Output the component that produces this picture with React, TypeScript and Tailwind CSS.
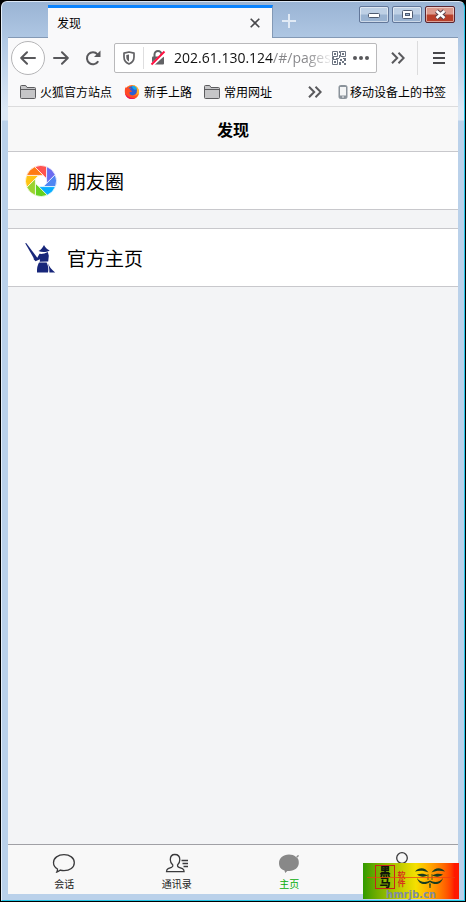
import type { ReactNode } from "react"

const bladeColors = ["#ff5350", "#6b6bf0", "#5086f2", "#08aeff", "#66d11f", "#9ad32f", "#ffc414", "#ff7a14"]

function FolderIcon() {
  return (
    <svg width="16" height="14" viewBox="0 0 16 14" fill="#c5c5c7" stroke="#5c5c5f" strokeLinejoin="round">
      <path d="M.5 12.500v-11a1 1 0 0 1 1-1h4.200l1.300 2h7.500a1 1 0 0 1 1 1v9a1 1 0 0 1-1 1h-13a1 1 0 0 1-1-1z" />
      <path d="M.5 4.500h15" />
    </svg>
  )
}

function FirefoxIcon() {
  return (
    <svg width="16" height="16" viewBox="0 0 16 16">
      <circle cx="8" cy="8" r="7" fill="#ff6a1c" />
      <path d="M8 1c3.900 0 7 3.100 7 7s-3.100 7-7 7c-.9 0-1.800-.2-2.600-.5C10 14.500 13 11.500 12.800 8 12.700 5 11 2.500 8 1z" fill="#ffb52b" />
      <circle cx="8.300" cy="6.800" r="4.600" fill="#2a5fd2" />
      <path d="M8 1.800c2-.2 4 .9 4.800 2.700.2 1-1.400 1.500-2.800.9C8.800 4.800 8 3.500 8 1.800z" fill="#12a8ee" />
      <path d="M1.500 2.500C.8 5 .5 7.500 1.200 10c1 3 3.800 5 6.800 5 3.600 0 6-2.500 6.200-5.500-1.700 2.500-4.200 3-6.200 2.200C5.900 10.900 5 9.300 5.700 8.300c.7-.8 1.800-.2 2.500-.8-.3-.9-1.800-1-2.200-1.700 0-.7.700-1 1.300-1.500-1-.3-1.900 0-2.600.3-.7-.5-1-1.200-1-2-.7.400-1.300 1-1.700 1.700-.3-.6-.5-1.200-.5-1.800z" fill="#ff4a24" />
      <path d="M1.100 9.500c.6 3.400 3.500 5.600 7 5.500 1.500 0 2.500-.4 3.600-1.100C7.500 14.800 3.500 13 1.100 9.500z" fill="#e8125c" />
    </svg>
  )
}

function MoreIcon() {
  return (
    <svg width="14" height="12" viewBox="0 0 14 12" fill="none" stroke="#5a5a5d" strokeWidth="2">
      <path d="M1 .8 6.200 6 1 11.200M7.500.8 12.700 6l-5.200 5.200" />
    </svg>
  )
}

function QrIcon() {
  return (
    <svg width="14" height="14" viewBox="0 0 14 14" fill="none" stroke="#6d7582">
      <path d="M.5.5h5v5h-5zM8.500.5h5v5h-5zM.5 8.500h5v5h-5z" />
      <path
        d="M2 2h2v2H2zM10 2h2v2h-2zM2 10h2v2H2zM7 0h1v2H7zM7 4h1v3H7zM0 6h2v2H0zM4 7h3v1H4zM8 8h2v2H8zM11 7h3v1h-3zM10 10h2v2h-2zM12 8h2v2h-2zM7 11h2v3H7zM12 12h2v2h-2z"
        fill="#6d7582"
        stroke="none"
      />
    </svg>
  )
}

function ShutterIcon() {
  return (
    <svg width="32" height="32" viewBox="-16 -16 32 32">
      {bladeColors.map((color, i) => (
        <path
          key={color}
          d="M5.600-2.300V-14.500A15.500 15.500 0 0 0-6.300-14.200L2.300-5.600z"
          fill={color}
          stroke="#fff"
          strokeWidth=".7"
          transform={`rotate(${i * 45})`}
        />
      ))}
    </svg>
  )
}

function SwordsmanIcon() {
  return (
    <svg width="32" height="32" viewBox="0 0 32 32" fill="#17267a">
      <path d="M.2 1.200 1.200 1l9.600 12.700 2 2.800-1.800 1.300-2.400-1.900z" />
      <path d="M19 3c1.200 2.400 3 4.200 5.700 5.600-3.600 1.900-7.800 1.900-11.200.5C16 7.700 17.800 5.600 19 3z" />
      <path d="M14.500 11.800c2.500.4 5.500-.2 8.300-1.800l1 3.800-.6 5.600-8.500.4.400-2.600-4.600 2-2.200-2.400 2.200-1.300 1.600.6z" />
      <path d="M14 20.600h7.600c1.700 3.200 2.100 6.500 1.400 9.900H12c-.2-3.800.4-7.200 2-9.900z" />
      <path d="M22.500 20.600c1.600 3.900 4 7.400 7.700 9.900h-5.800c.1-3.400-.5-6.500-1.900-9.900z" />
    </svg>
  )
}

function WindowButton({ label, close, children }: { label: string; close?: boolean; children: ReactNode }) {
  return (
    <button
      aria-label={label}
      className={`flex h-[17px] w-[30px] items-center justify-center rounded-xs border shadow-[inset_0_0_0_1px_rgba(255,255,255,0.5)] ${
        close
          ? "border-[#5b2430] bg-linear-to-b from-[#dc9a8d] from-45% to-[#b8402b] to-55%"
          : "border-[#62779a] bg-linear-to-b from-[#bed0e5] from-45% to-[#9ab3d1] to-55%"
      }`}
    >
      {children}
    </button>
  )
}

function Bookmark({ icon, children }: { icon: ReactNode; children: ReactNode }) {
  return (
    <a href="#" className="flex shrink-0 items-center gap-1 whitespace-nowrap">
      {icon}
      {children}
    </a>
  )
}

function Cell({ icon, children }: { icon: ReactNode; children: ReactNode }) {
  return (
    <a href="#" className="flex h-[59px] items-center gap-2.5 border-y border-[#c8c8cc] bg-white px-[17px] text-[19px] text-black">
      {icon}
      {children}
    </a>
  )
}

function TabItem({ label, active, icon }: { label?: string; active?: boolean; icon: ReactNode }) {
  return (
    <a
      href="#"
      aria-label={label ?? "我"}
      className={`flex flex-1 flex-col items-center gap-px pt-1.5 text-[10px] leading-4 ${active ? "text-[#09ad09]" : "text-[#222]"}`}
    >
      {icon}
      {label}
    </a>
  )
}

export default function App() {
  return (
    <div className="relative flex min-h-screen flex-col border border-black bg-black font-['Noto_Sans_CJK_SC',sans-serif] text-xs text-black">
      <div className="flex flex-1 flex-col rounded-t-md border-t border-r border-b border-l border-t-[#dce8f6] border-r-[#25c5e5] border-b-[#25c5e5] border-l-[#e5effa] bg-[linear-gradient(to_bottom,#9ab4d4_0px,#b0c8e4_38px,#dce8f5_108px,#dce8f5_118px,#bad1ea_119px)] px-1.5 pb-1.5">
        {/* Title bar */}
        <div className="flex h-9 items-start border-b border-[#8399b5]">
          <div className="mt-[3px] ml-10 flex h-[33px] w-[225px] items-center justify-between border-t-3 border-r border-t-[#0a84ff] border-r-[#8399b5] bg-[#f9f9fa] pr-3 pl-[9px]">
            <span>发现</span>
            <button aria-label="关闭标签页">
              <svg width="10" height="10" viewBox="0 0 10 10" stroke="#48484b" strokeWidth="1.600">
                <path d="M.7.7l8.600 8.600M9.300.7.7 9.300" />
              </svg>
            </button>
          </div>
          <button aria-label="新建标签页" className="mt-3 ml-[9px]">
            <svg width="14" height="14" viewBox="0 0 14 14" stroke="#e1eaf5" strokeWidth="2">
              <path d="M7 0v14M0 7h14" />
            </svg>
          </button>
          <div className="mt-1 mr-[3px] ml-auto flex gap-[3px]">
            <WindowButton label="最小化">
              <svg width="12" height="5" viewBox="0 0 12 5" className="mt-0.5">
                <rect x=".5" y=".5" width="11" height="4" rx="1" fill="#fff" stroke="#4e5b70" />
              </svg>
            </WindowButton>
            <WindowButton label="最大化">
              <svg width="11" height="9" viewBox="0 0 11 9">
                <rect x=".5" y=".5" width="10" height="8" rx="1" fill="#fff" stroke="#4e5b70" />
                <rect x="3.500" y="3.500" width="4" height="2" fill="#9db5d3" stroke="#4e5b70" />
              </svg>
            </WindowButton>
            <WindowButton label="关闭" close>
              <svg width="13" height="11" viewBox="0 0 13 11">
                <path d="m2.500 2 8 7m0-7-8 7" stroke="#57404a" strokeWidth="4.500" />
                <path d="m2.500 2 8 7m0-7-8 7" stroke="#fff" strokeWidth="2.500" />
              </svg>
            </WindowButton>
          </div>
        </div>

        {/* Navigation toolbar */}
        <div className="flex h-10 items-center bg-[#f9f9fa] pr-3 pl-[3px]">
          <button aria-label="后退" className="flex size-[34px] shrink-0 items-center justify-center rounded-full border border-[#b5b5b7] bg-white">
            <svg width="16" height="14" viewBox="0 0 16 14" fill="none" stroke="#58585b" strokeWidth="2" strokeLinecap="round" strokeLinejoin="round">
              <path d="M15 7H1.500M7 1.200 1.200 7 7 12.800" />
            </svg>
          </button>
          <button aria-label="前进" className="ml-2 shrink-0">
            <svg width="16" height="14" viewBox="0 0 16 14" fill="none" stroke="#58585b" strokeWidth="2" strokeLinecap="round" strokeLinejoin="round">
              <path d="M1 7h13.500M9 1.200 14.800 7 9 12.800" />
            </svg>
          </button>
          <button aria-label="刷新" className="ml-4 shrink-0">
            <svg width="16" height="16" viewBox="0 0 16 16" fill="none" stroke="#58585b" strokeWidth="2">
              <path d="M13.200 11.200A6 6 0 1 1 12.500 4.300" />
              <path d="M15.500.5V7H9z" fill="#58585b" stroke="none" />
            </svg>
          </button>
          <div className="ml-[13px] flex h-[30px] min-w-0 flex-1 items-center rounded-xs border border-[#b9b9bb] bg-white pr-1.5 pl-2">
            <svg width="12" height="14" viewBox="0 0 12 14" className="shrink-0">
              <path d="M6 1 11 2.200V6c0 3.500-2 5.700-5 7-3-1.300-5-3.500-5-7V2.200z" fill="none" stroke="#626265" strokeWidth="1.700" strokeLinejoin="round" />
              <path d="M6 3.500v7C4.200 9.500 3.300 8 3.300 6V4z" fill="#626265" />
            </svg>
            <span className="ml-2 h-[22px] w-px shrink-0 bg-[#dededf]" />
            <svg width="16" height="16" viewBox="0 0 16 16" className="ml-1.5 shrink-0">
              <path d="M4.500 7V4.500a3.500 3.500 0 0 1 7 0V7" fill="none" stroke="#626265" strokeWidth="2" />
              <rect x="2" y="6.500" width="12" height="8" rx="1" fill="#626265" />
              <path d="M.8 16 15.500 2.500" stroke="#fff" strokeWidth="3.500" />
              <path d="M1.500 14.500 14.500 1.500" stroke="#ff1040" strokeWidth="2" />
            </svg>
            <input
              aria-label="地址"
              defaultValue="202.61.130.124/#/pages/"
              className="ml-2 min-w-0 flex-1 bg-[linear-gradient(to_right,#111_99px,#858588_99px,#858588_132px,transparent_160px)] bg-clip-text font-['Open_Sans',sans-serif] text-sm text-transparent outline-none"
            />
            <button aria-label="二维码" className="shrink-0">
              <QrIcon />
            </button>
            <button aria-label="页面操作" className="ml-1.5 shrink-0">
              <svg width="18" height="4" viewBox="0 0 18 4" fill="#58585b">
                <circle cx="3" cy="2" r="2" />
                <circle cx="9" cy="2" r="2" />
                <circle cx="15" cy="2" r="2" />
              </svg>
            </button>
          </div>
          <button aria-label="更多工具" className="ml-3.5 shrink-0">
            <MoreIcon />
          </button>
          <span className="ml-3 h-[34px] w-px shrink-0 bg-[#dcdcdd]" />
          <button aria-label="打开菜单" className="ml-[15px] shrink-0">
            <svg width="13" height="12" viewBox="0 0 13 12" stroke="#48484b" strokeWidth="2">
              <path d="M0 1h12M0 6h12M0 11h12" />
            </svg>
          </button>
        </div>

        {/* Bookmarks bar */}
        <div className="flex h-[29px] items-center gap-3 border-b border-[#dcdcdd] bg-[#f9f9fa] px-3">
          <Bookmark icon={<FolderIcon />}>火狐官方站点</Bookmark>
          <Bookmark icon={<FirefoxIcon />}>新手上路</Bookmark>
          <Bookmark icon={<FolderIcon />}>常用网址</Bookmark>
          <button aria-label="更多书签" className="ml-auto shrink-0">
            <MoreIcon />
          </button>
          <a href="#" className="ml-1 flex shrink-0 items-center gap-0.5 whitespace-nowrap">
            <svg width="10" height="14" viewBox="0 0 10 14">
              <rect x="1" y=".5" width="8" height="13" rx="1.500" fill="#8b939b" stroke="#8b939b" />
              <rect x="2" y="2" width="6" height="8.500" fill="#f4f5f6" />
              <circle cx="5" cy="12" r=".8" fill="#fff" />
            </svg>
            移动设备上的书签
          </a>
        </div>

        {/* Page */}
        <main className="flex flex-1 flex-col bg-[#f3f4f6]">
          <h1 className="flex h-11 items-center justify-center bg-[#f8f8f8] text-base font-bold">发现</h1>
          <div className="flex flex-1 flex-col gap-[18px]">
            <Cell icon={<ShutterIcon />}>朋友圈</Cell>
            <Cell icon={<SwordsmanIcon />}>官方主页</Cell>
          </div>
          <nav className="flex h-[50px] border-t border-[#a0a0a5] bg-[#f8f8f8]">
            <TabItem
              label="会话"
              icon={
                <svg width="24" height="24" viewBox="0 0 24 24" fill="none" stroke="#3a3a3c" strokeWidth="1.300">
                  <path d="M5.500 18c-2.500-1.500-4-3.800-4-6.300C1.500 7 6.200 3.600 12 3.600S22.300 7 22.300 11.700 17.800 19.600 12 19.600c-1.300 0-2.500-.1-3.600-.5-1 .9-2.200 1.600-3.600 1.900.5-1 .7-2 .7-3z" />
                </svg>
              }
            />
            <TabItem
              label="通讯录"
              icon={
                <svg width="24" height="24" viewBox="0 0 24 24" fill="none" stroke="#3a3a3c" strokeWidth="1.300">
                  <path d="M9.800 3.500c3 0 5 2 5 5.200 0 2.300-.8 4-2.300 5.300-.2 1.500.3 1.900 1.500 2.300l3.500 1.300c1.300.6 1.600 1.600 1.600 3.100H1.500c0-1.500.3-2.500 1.600-3.100l3.400-1.300c1.300-.5 1.700-.9 1.300-2.300-1.500-1.300-2.500-3-2.500-5.300 0-3.200 1.600-5.200 4.500-5.200z" />
                  <path d="M16.500 9.500H23M17.500 12.500H23M18.500 15.500H23" />
                </svg>
              }
            />
            <TabItem
              label="主页"
              active
              icon={
                <svg width="24" height="24" viewBox="0 0 24 24" fill="#888">
                  <path d="M12 3.500c2.800 0 5 .8 6.800 2.200l2.300-1.600.8.500-1.300 2.700c1 1.400 1.300 3 1.200 5-.2 4.500-4 7.500-9.500 7.700l-2 .1L8.200 22l-.7-2.500C4.200 18.500 2 16 2 12.200 2 7 6 3.500 12 3.500z" />
                  <path d="m19 5.300 2 2" stroke="#f8f8f8" strokeWidth=".8" />
                </svg>
              }
            />
            <TabItem
              icon={
                <svg width="24" height="24" viewBox="0 0 24 24" fill="none" stroke="#3a3a3c" strokeWidth="1.300">
                  <circle cx="12" cy="7" r="5.300" />
                  <path d="M3 22c0-5 3.500-8 9-8s9 3 9 8z" />
                </svg>
              }
            />
          </nav>
        </main>
      </div>

      {/* Watermark in the corner */}
      <div className="absolute right-1.5 bottom-0.5 flex h-9 w-24 flex-col items-center justify-between bg-linear-to-r from-[#2f9a00] via-[#f5e000] via-55% to-[#ff1800] to-95% pt-0.5">
        <div className="flex w-full items-start pl-3">
          <span className="flex h-6 w-5 items-center justify-center border border-[#c82418] text-[11px] leading-[18px] font-black text-[#10140a] [writing-mode:vertical-rl]">
            黑马
          </span>
          <span className="mt-1.5 ml-px text-[8px] leading-[10px] font-bold text-[#d8321c] [writing-mode:vertical-rl]">软件</span>
          <svg width="32" height="22" viewBox="0 0 32 22" className="ml-2 mt-px" fill="#183c20">
            <path d="M1 5.500c4-4.500 10-4.500 13.500 1C10 4.500 6 4.300 1 5.500zM31 5.500c-4-4.500-10-4.500-13.500 1 4.500-2 8.500-2.200 13.500-1z" />
            <path d="M3 8.500c4-1.500 7.500-1 11 1-4 1.800-8 1.500-11-1zM29 8.500c-4-1.500-7.500-1-11 1 4 1.800 8 1.500 11-1z" />
            <path d="M16 14.500c-3 2-10 2.500-13-2.500 2 7 8.500 7.500 13 4 4.500 3.500 11 3 13-4-3 5-10 4.500-13 2.500z" />
            <path d="M15.200 17.500h1.600l-.3 4.500h-1z" />
            <path d="M14 8v6M18 8v6" stroke="#183c20" strokeWidth=".7" />
          </svg>
        </div>
        <span className="font-['DejaVu_Sans',sans-serif] text-[10px] leading-[9px] font-bold text-[#7f8ca2]">hmrjb.cn</span>
        <span className="absolute top-3.5 left-1 h-px w-[88px] bg-[#f03b10]/70" />
      </div>
    </div>
  )
}
